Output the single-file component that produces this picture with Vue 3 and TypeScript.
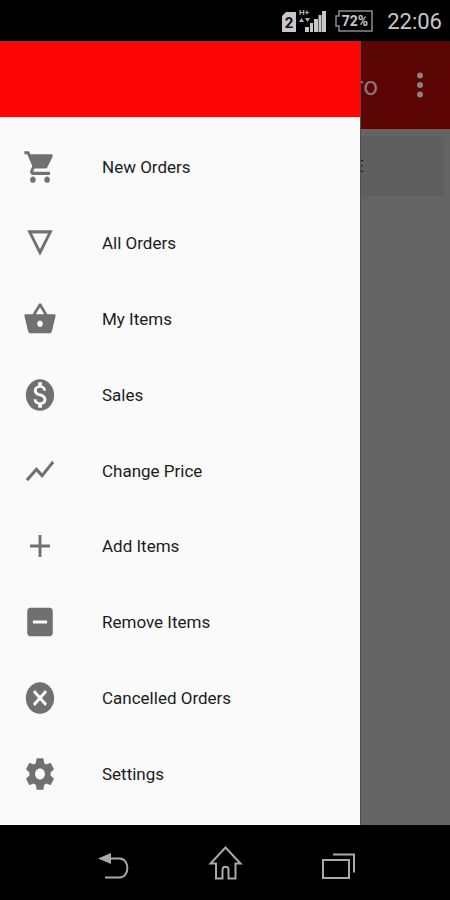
<script setup lang="ts">
interface MenuItem {
  label: string
  path: string
}

const items: MenuItem[] = [
  {
    label: 'New Orders',
    path: 'M7 18c-1.1 0-1.99.9-1.99 2S5.9 22 7 22s2-.9 2-2-.9-2-2-2zM1 2v2h2l3.6 7.59-1.35 2.45c-.16.28-.25.61-.25.96 0 1.1.9 2 2 2h12v-2H7.42c-.14 0-.25-.11-.25-.25l.03-.12.9-1.63h7.45c.75 0 1.41-.41 1.75-1.03l3.58-6.49c.08-.14.12-.31.12-.48 0-.55-.45-1-1-1H5.21l-.94-2H1zm16 16c-1.1 0-1.99.9-1.99 2s.89 2 1.99 2 2-.9 2-2-.9-2-2-2z',
  },
  { label: 'All Orders', path: 'M3 4l9 16 9-16H3zm3.38 2h11.25L12 16 6.38 6z' },
  {
    label: 'My Items',
    path: 'M17.21 9l-4.38-6.56c-.19-.28-.51-.42-.83-.42-.32 0-.64.14-.83.43L6.79 9H2c-.55 0-1 .45-1 1 0 .09.01.18.04.27l2.54 9.27c.23.84 1 1.46 1.92 1.46h13c.92 0 1.69-.62 1.93-1.46l2.54-9.27L23 10c0-.55-.45-1-1-1h-4.79zM9 9l3-4.4L15 9H9zm3 8c-1.1 0-2-.9-2-2s.9-2 2-2 2 .9 2 2-.9 2-2 2z',
  },
  {
    label: 'Sales',
    path: 'M12 2C6.48 2 2 6.48 2 12s4.48 10 10 10 10-4.48 10-10S17.52 2 12 2zm1.41 16.09V20h-2.67v-1.93c-1.71-.36-3.16-1.46-3.27-3.4h1.96c.1 1.05.82 1.87 2.65 1.87 1.96 0 2.4-.98 2.4-1.59 0-.83-.44-1.61-2.67-2.14-2.48-.6-4.18-1.62-4.18-3.67 0-1.72 1.39-2.84 3.11-3.21V4h2.67v1.95c1.86.45 2.79 1.86 2.85 3.39H14.3c-.05-1.11-.64-1.87-2.22-1.87-1.5 0-2.4.68-2.4 1.64 0 .84.65 1.39 2.67 1.91s4.18 1.39 4.18 3.91c-.01 1.83-1.38 2.83-3.12 3.16z',
  },
  { label: 'Change Price', path: 'M3.5 18.49l6-6.01 4 4L22 6.92l-1.41-1.41-7.09 7.97-4-4L2 16.99z' },
  { label: 'Add Items', path: 'M19 13h-6v6h-2v-6H5v-2h6V5h2v6h6v2z' },
  {
    label: 'Remove Items',
    path: 'M19 3H5c-1.1 0-2 .9-2 2v14c0 1.1.9 2 2 2h14c1.1 0 2-.9 2-2V5c0-1.1-.9-2-2-2zm-2 10H7v-2h10v2z',
  },
  {
    label: 'Cancelled Orders',
    path: 'M12 2C6.47 2 2 6.47 2 12s4.47 10 10 10 10-4.47 10-10S17.53 2 12 2zm5 13.59L15.59 17 12 13.41 8.41 17 7 15.59 10.59 12 7 8.41 8.41 7 12 10.59 15.59 7 17 8.41 13.41 12 17 15.59z',
  },
  {
    label: 'Settings',
    path: 'M19.43 12.98c.04-.32.07-.64.07-.98s-.03-.66-.07-.98l2.11-1.65c.19-.15.24-.42.12-.64l-2-3.46c-.12-.22-.39-.3-.61-.22l-2.49 1c-.52-.4-1.08-.73-1.69-.98l-.38-2.65C14.46 2.18 14.25 2 14 2h-4c-.25 0-.46.18-.49.42l-.38 2.65c-.61.25-1.17.59-1.69.98l-2.49-1c-.23-.09-.49 0-.61.22l-2 3.46c-.13.22-.07.49.12.64l2.11 1.65c-.04.32-.07.65-.07.98s.03.66.07.98l-2.11 1.65c-.19.15-.24.42-.12.64l2 3.46c.12.22.39.3.61.22l2.49-1c.52.4 1.08.73 1.69.98l.38 2.65c.03.24.24.42.49.42h4c.25 0 .46-.18.49-.42l.38-2.65c.61-.25 1.17-.59 1.69-.98l2.49 1c.23.09.49 0 .61-.22l2-3.46c.12-.22.07-.49-.12-.64l-2.11-1.65zM12 15.5c-1.93 0-3.5-1.57-3.5-3.5s1.57-3.5 3.5-3.5 3.5 1.57 3.5 3.5-1.57 3.5-3.5 3.5z',
  },
]
</script>

<template>
  <div class="screen">
    <header class="status">
      <div class="signal">
        <svg class="sim" viewBox="0 0 14 20" aria-hidden="true">
          <path d="M4 0H14V20H0V4z" fill="#c8c8c8" />
          <text x="7" y="16" text-anchor="middle" class="sim-text">2</text>
        </svg>
        <svg class="bars" viewBox="0 0 28 26" aria-hidden="true">
          <text x="0" y="8" class="net-text">H+</text>
          <path d="M0 15l2.500-4 2.500 4zM6 11h5l-2.500 4z" fill="#b4b4b4" />
          <path d="M6 20h4v5H6zM11 16h3v9h-3zM15 12h4v13h-4zM19.500 8h3v17h-3zM23 4h4v21h-4z" fill="#c8c8c8" />
        </svg>
      </div>
      <div class="battery">
        <svg viewBox="0 0 40 22" aria-hidden="true">
          <path d="M5 1H38V21H5V16H2V6H5z" fill="none" stroke="#8c8c8c" stroke-width="1.500" />
          <text x="21" y="16" text-anchor="middle" class="battery-text">72%</text>
        </svg>
      </div>
      <time class="clock">22:06</time>
    </header>

    <main class="body">
      <div class="page">
        <div class="appbar">
          <span class="title">ro</span>
          <button class="more" type="button" aria-label="More options">
            <svg viewBox="0 0 8 28" aria-hidden="true">
              <circle cx="4" cy="4.500" r="3" />
              <circle cx="4" cy="14" r="3" />
              <circle cx="4" cy="23.500" r="3" />
            </svg>
          </button>
        </div>
        <div class="card">E</div>
      </div>

      <nav class="drawer">
        <div class="drawer-head"></div>
        <ul class="menu">
          <li v-for="item in items" :key="item.label">
            <a href="#">
              <svg viewBox="0 0 24 24" preserveAspectRatio="none" aria-hidden="true">
                <path :d="item.path" />
              </svg>
              <span>{{ item.label }}</span>
            </a>
          </li>
        </ul>
      </nav>
    </main>

    <footer class="navbar">
      <button type="button" aria-label="Back">
        <svg viewBox="0 0 36 35" aria-hidden="true">
          <path d="M15 13.500H25.500C36 13.500 36 32.500 25.500 32.500H11" />
          <path class="solid" d="M4 13.500L17 8V19z" />
        </svg>
      </button>
      <button type="button" aria-label="Home">
        <svg viewBox="0 0 36 35" aria-hidden="true">
          <path d="M18.500 2.500L33.500 18.500H28.500V33.500H21.500V25C21.500 20.500 15.500 20.500 15.500 25V33.500H9V18.500H3.500z" />
        </svg>
      </button>
      <button type="button" aria-label="Recent apps">
        <svg viewBox="0 0 36 35" aria-hidden="true">
          <path d="M3 15H29V33H3z" />
          <path d="M13 9.500H34V27.500" />
        </svg>
      </button>
    </footer>
  </div>
</template>

<style>
body {
  margin: 0;
}
</style>

<style scoped>
.screen {
  display: flex;
  flex-direction: column;
  min-height: 100vh;
  background: #000;
  font-family: Roboto, "Liberation Sans", sans-serif;
}
button {
  display: flex;
  align-items: center;
  justify-content: center;
  border: 0;
  padding: 0;
  background: none;
}
.status {
  display: flex;
  align-items: center;
  justify-content: flex-end;
  gap: 7px;
  height: 41px;
  padding-right: 8px;
  box-sizing: border-box;
}
.signal {
  display: flex;
  align-items: flex-end;
  gap: 3px;
  padding-bottom: 2px;
}
.sim {
  width: 14px;
  height: 20px;
  margin-bottom: 1px;
}
.bars {
  width: 28px;
  height: 26px;
}
.sim-text {
  font-size: 15px;
  font-weight: 700;
  fill: #111;
}
.net-text {
  font-size: 8px;
  font-weight: 700;
  fill: #b4b4b4;
}
.battery svg {
  display: block;
  width: 40px;
  height: 22px;
}
.battery-text {
  font-size: 14px;
  font-weight: 700;
  fill: #c8c8c8;
}
.clock {
  margin-left: 6px;
  color: #c8c8c8;
  font-size: 22px;
  line-height: 40px;
  padding-top: 2px;
}
.body {
  position: relative;
  display: flex;
  flex: 1;
}
.page {
  flex: 1;
  background: #646464;
}
.appbar {
  display: flex;
  align-items: center;
  justify-content: flex-end;
  gap: 36px;
  height: 88px;
  padding-right: 24px;
  box-sizing: border-box;
  background: #5c0505;
}
.title {
  color: #8e7474;
  font-size: 26px;
  line-height: 32px;
  padding-top: 2px;
}
.more svg {
  width: 12px;
  height: 28px;
  fill: #8e8080;
}
.card {
  display: flex;
  align-items: center;
  justify-content: flex-end;
  height: 60px;
  margin: 7px 6px;
  padding-right: 80px;
  box-sizing: border-box;
  border-radius: 2px;
  background: #5f5f5f;
  color: #222;
  font-size: 17px;
}
.drawer {
  position: absolute;
  inset: 0 auto 0 0;
  display: flex;
  flex-direction: column;
  width: calc(80% + 1px);
  box-sizing: border-box;
  border-right: 1px solid #505050;
  background: #fafafa;
}
.drawer-head {
  height: 76px;
  background: #fd0606;
}
.menu {
  display: flex;
  flex: 1;
  flex-direction: column;
  margin: 0;
  padding: 12px 0 13px;
  list-style: none;
}
.menu li {
  display: flex;
  flex: 1;
}
.menu a {
  display: flex;
  flex: 1;
  align-items: center;
  gap: 45px;
  padding-left: 23px;
  color: #1c1c1c;
  font-size: 17px;
  line-height: 26px;
  text-decoration: none;
}
.menu svg {
  width: 34px;
  height: 38px;
  fill: #707070;
}
.navbar {
  display: flex;
  height: 75px;
  padding: 0 56px;
}
.navbar button {
  flex: 1;
}
.navbar svg {
  width: 36px;
  height: 35px;
  fill: none;
  stroke: #aaa;
  stroke-width: 2;
}
.navbar .solid {
  fill: #aaa;
  stroke: none;
}
</style>
